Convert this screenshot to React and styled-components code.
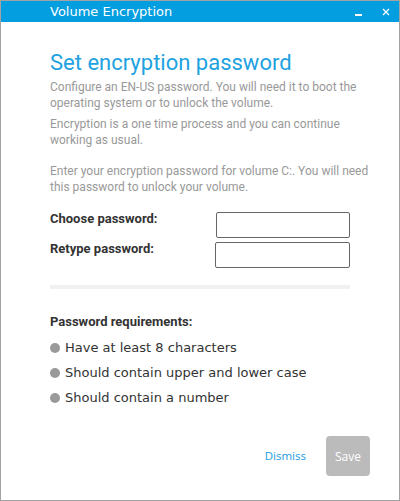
import React from "react";
import styled, { createGlobalStyle } from "styled-components";

const GlobalStyle = createGlobalStyle`
  html, body {
    margin: 0;
    padding: 0;
    background: #fff;
  }
  * {
    box-sizing: border-box;
  }
`;

const Window = styled.div`
  width: 400px;
  height: 501px;
  border: 1px solid #a3a3a3;
  background: #fff;
  display: flex;
  flex-direction: column;
  font-family: Roboto, "Liberation Sans", sans-serif;
`;

const TitleBar = styled.div`
  height: 21px;
  background: #029ee0;
  display: flex;
  align-items: center;
  padding-left: 49px;
  color: #fff;
  font-family: "DejaVu Sans", Verdana, sans-serif;
  font-size: 13px;
  .title {
    flex: 1;
  }
`;

const WinButton = styled.button`
  width: 27px;
  height: 21px;
  border: none;
  background: transparent;
  padding: 0;
  display: flex;
  align-items: center;
  justify-content: center;
  cursor: pointer;
`;

const Content = styled.div`
  flex: 1;
  display: flex;
  flex-direction: column;
  padding: 28px 49px 0 49px;
`;

const Heading = styled.h1`
  margin: 0 0 4px 0;
  font-weight: 400;
  font-size: 22px;
  line-height: 26px;
  color: #21a2df;
`;

const Para = styled.p`
  margin: 0 -20px ${({ gap }) => gap || 6}px 0;
  font-size: 12px;
  line-height: 15.5px;
  color: #999;
`;

const FieldRow = styled.div`
  display: flex;
  align-items: flex-start;
  justify-content: space-between;
  height: 26px;
  margin-bottom: ${({ gap }) => gap || 0}px;
  label {
    font-weight: 700;
    font-size: 13px;
    line-height: 14px;
    color: #333;
  }
`;

const Input = styled.input`
  width: ${({ w }) => w || 134}px;
  height: 26px;
  border: 1px solid #666;
  border-radius: 2px;
  outline: none;
`;

const Divider = styled.div`
  height: 4px;
  background: #f1f1f1;
  margin: 17px 0 25px 0;
`;

const SubTitle = styled.div`
  font-weight: 700;
  font-size: 13px;
  color: #333;
  margin-bottom: 11px;
`;

const ReqList = styled.ul`
  list-style: none;
  margin: 0;
  padding: 0;
  display: flex;
  flex-direction: column;
  gap: 9px;
`;

const ReqItem = styled.li`
  display: flex;
  align-items: center;
  gap: 5px;
  font-family: "DejaVu Sans", Verdana, sans-serif;
  font-size: 13px;
  line-height: 16px;
  color: #333;
  &::before {
    content: "";
    width: 10px;
    height: 10px;
    border-radius: 50%;
    background: #999;
  }
`;

const Footer = styled.div`
  display: flex;
  align-items: center;
  justify-content: flex-end;
  gap: 20px;
  padding: 0 29px 24px 0;
`;

const LinkButton = styled.button`
  border: none;
  background: transparent;
  padding: 0 0 1px 0;
  color: #1a9be0;
  font-family: "Open Sans", sans-serif;
  font-size: 11.5px;
  cursor: pointer;
`;

const SaveButton = styled.button`
  width: 44px;
  height: 40px;
  border: none;
  border-radius: 4px;
  background: #bbb;
  color: #fff;
  font-family: "Open Sans", sans-serif;
  font-size: 12px;
  padding: 0;
`;

export default function App() {
  return (
    <>
      <GlobalStyle />
      <Window>
        <TitleBar>
          <span className="title">Volume Encryption</span>
          <WinButton aria-label="minimize">
            <svg width="8" height="8" viewBox="0 0 8 8">
              <rect x="0" y="6" width="7" height="2" fill="#fff" />
            </svg>
          </WinButton>
          <WinButton aria-label="close">
            <svg width="8" height="8" viewBox="0 0 8 8">
              <path d="M1 1 L7 7 M7 1 L1 7" stroke="#fff" strokeWidth="1.2" />
            </svg>
          </WinButton>
        </TitleBar>
        <Content>
          <Heading>Set encryption password</Heading>
          <Para>
            Configure an EN-US password. You will need it to boot the operating
            system or to unlock the volume.
          </Para>
          <Para gap={16}>
            Encryption is a one time process and you can continue working as
            usual.
          </Para>
          <Para gap={17}>
            Enter your encryption password for volume C:. You will need this
            password to unlock your volume.
          </Para>
          <FieldRow gap={4}>
            <label>Choose password:</label>
            <Input type="password" />
          </FieldRow>
          <FieldRow>
            <label>Retype password:</label>
            <Input type="password" w={135} />
          </FieldRow>
          <Divider />
          <SubTitle>Password requirements:</SubTitle>
          <ReqList>
            <ReqItem>Have at least 8 characters</ReqItem>
            <ReqItem>Should contain upper and lower case</ReqItem>
            <ReqItem>Should contain a number</ReqItem>
          </ReqList>
        </Content>
        <Footer>
          <LinkButton>Dismiss</LinkButton>
          <SaveButton>Save</SaveButton>
        </Footer>
      </Window>
    </>
  );
}
